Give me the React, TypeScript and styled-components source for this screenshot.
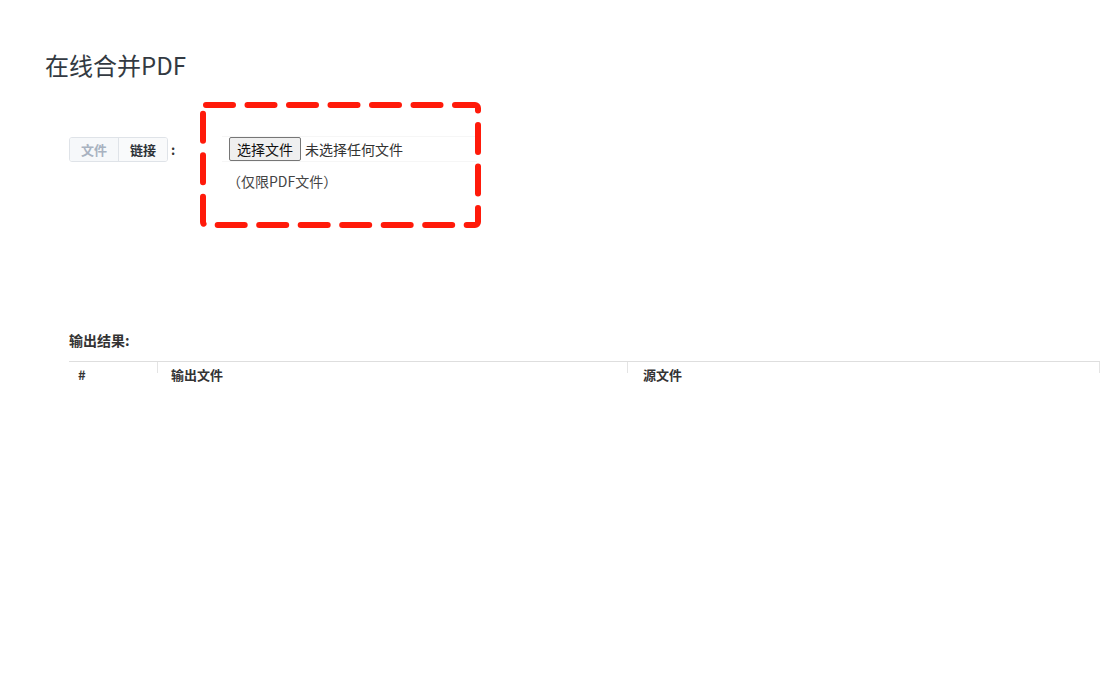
import React from "react";
import styled, { createGlobalStyle } from "styled-components";

const GlobalStyle = createGlobalStyle`
  html, body {
    margin: 0;
    padding: 0;
    background: #fff;
    overflow: hidden;
  }
  body {
    font-family: "Noto Sans CJK SC", "Noto Sans", "Liberation Sans", sans-serif;
    color: #333;
  }
`;

const Page = styled.div`
  width: 1100px;
  height: 700px;
  padding-left: 45px;
  box-sizing: border-box;
`;

const Title = styled.h2`
  margin: 0;
  padding-top: 48px;
  font-size: 24px;
  line-height: 34px;
  font-weight: 400;
  color: #333a42;
`;

const FormRow = styled.div`
  display: flex;
  align-items: flex-start;
  margin-top: 20px;
  margin-left: 24px;
`;

const LabelCol = styled.div`
  width: 131px;
  padding-top: 35px;
  display: flex;
  align-items: center;
`;

const ToggleGroup = styled.div`
  display: flex;
  height: 25px;
  border: 1px solid #dfe3e8;
  border-radius: 3px;
  box-sizing: border-box;
  overflow: hidden;
`;

const ToggleButton = styled.button<{ $active?: boolean }>`
  border: none;
  margin: 0;
  padding: 0;
  width: ${(p) => (p.$active ? 49 : 48)}px;
  font-family: inherit;
  font-size: 13px;
  font-weight: 700;
  line-height: 23px;
  color: ${(p) => (p.$active ? "#a8b2c0" : "#2d3238")};
  background: ${(p) => (p.$active ? "#f6f8fa" : "#f9fafb")};
  border-right: ${(p) => (p.$active ? "1px solid #dfe3e8" : "none")};
`;

const Colon = styled.span`
  margin-left: 3px;
  font-size: 13px;
  font-weight: 700;
  color: #333;
`;

const UploadCell = styled.div`
  position: relative;
  width: 281px;
  height: 126px;
  box-sizing: border-box;
  padding: 35px 0 0 29px;
`;

const InputLine = styled.div`
  display: flex;
  align-items: center;
  height: 24px;
  margin-left: -7px;
  padding-left: 7px;
  width: 248px;
  border-top: 1px solid #f6f6f6;
  border-bottom: 1px solid #f6f6f6;
  margin-top: -1px;
`;

const FileButton = styled.button`
  height: 24px;
  padding: 0 7px;
  margin: 0;
  font-family: inherit;
  font-size: 14px;
  color: #111;
  background: #efefef;
  border: 1px solid #767676;
  border-radius: 2px;
  box-sizing: border-box;
`;

const FileName = styled.span`
  margin-left: 4px;
  font-size: 14px;
  color: #333;
`;

const Hint = styled.div`
  margin-top: 10px;
  margin-left: -2px;
  font-size: 14px;
  line-height: 18px;
  color: #444;
`;

const Annotation = styled.svg`
  position: absolute;
  left: 0;
  top: 0;
  pointer-events: none;
`;

const SectionLabel = styled.div`
  margin-top: 103px;
  margin-left: 24px;
  font-size: 14px;
  font-weight: 700;
  line-height: 18px;
  color: #333;
`;

const Table = styled.div`
  display: grid;
  grid-template-columns: 88px 470px 472px 40px;
  margin-top: 12px;
  margin-left: 24px;
  width: 1070px;
  border-top: 1px solid #dedede;
`;

const HeaderCell = styled.div<{ $pad: number; $sep?: boolean }>`
  position: relative;
  padding: 4px 0 0 ${(p) => p.$pad}px;
  height: 30px;
  box-sizing: border-box;
  font-size: 13px;
  font-weight: 700;
  line-height: 18px;
  color: #333;

  &::before {
    content: "";
    display: ${(p) => (p.$sep ? "block" : "none")};
    position: absolute;
    left: 0;
    top: 0;
    width: 1px;
    height: 11px;
    background: #e4e4e4;
  }
`;

const App = () => {
  return (
    <>
      <GlobalStyle />
      <Page>
        <Title>在线合并PDF</Title>
        <FormRow>
          <LabelCol>
            <ToggleGroup>
              <ToggleButton $active>文件</ToggleButton>
              <ToggleButton>链接</ToggleButton>
            </ToggleGroup>
            <Colon>:</Colon>
          </LabelCol>
          <UploadCell>
            <InputLine>
              <FileButton>选择文件</FileButton>
              <FileName>未选择任何文件</FileName>
            </InputLine>
            <Hint>（仅限PDF文件）</Hint>
            <Annotation width="281" height="126" viewBox="0 0 281 126">
              <rect
                x="3"
                y="3"
                width="275"
                height="120"
                rx="3"
                fill="none"
                stroke="#ff1a0a"
                strokeWidth="6"
                strokeLinecap="round"
                strokeDasharray="27 14.5"
              />
            </Annotation>
          </UploadCell>
        </FormRow>
        <SectionLabel>输出结果:</SectionLabel>
        <Table>
          <HeaderCell $pad={9}>#</HeaderCell>
          <HeaderCell $pad={14} $sep>输出文件</HeaderCell>
          <HeaderCell $pad={16} $sep>源文件</HeaderCell>
          <HeaderCell $pad={0} $sep />
        </Table>
      </Page>
    </>
  );
};

export default App;
